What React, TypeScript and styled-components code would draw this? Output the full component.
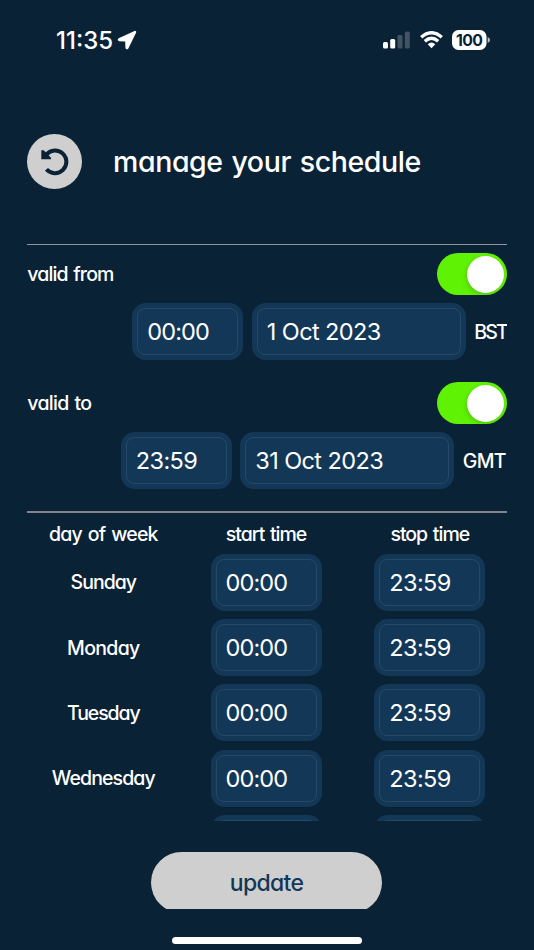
import React from "react";
import styled, { createGlobalStyle } from "styled-components";

const GlobalStyle = createGlobalStyle`
  * { box-sizing: border-box; }
  body { margin: 0; background: #0a2236; }
`;

const Screen = styled.div`
  width: 534px;
  height: 950px;
  overflow: hidden;
  display: flex;
  flex-direction: column;
  background: #0a2236;
  color: #fff;
  font-family: Inter, sans-serif;
`;

const Label = styled.span<{ $size?: number; $track?: number }>`
  font-family: Inter, sans-serif;
  font-weight: 500;
  font-feature-settings: "cv11";
  white-space: nowrap;
  line-height: 30px;
  font-size: ${(p) => p.$size ?? 19.5}px;
  letter-spacing: ${(p) => p.$track ?? 0}px;
  word-spacing: 1.5px;
`;

const StatusBar = styled.div`
  height: 80px;
  flex: none;
  padding: 0 44px 0 56px;
  display: flex;
  align-items: center;
  justify-content: space-between;
`;

const Clock = styled.div`
  display: flex;
  align-items: center;
  gap: 4px;
  font-size: 24px;
  font-weight: 500;
  letter-spacing: 0;
`;

const Indicators = styled.div`
  display: flex;
  align-items: center;
  gap: 9.5px;
`;

const Header = styled.header`
  height: 163.5px;
  flex: none;
  padding: 0 0 0 27px;
  display: flex;
  align-items: center;
  gap: 31px;
`;

const Title = styled(Label)`
  padding-top: 1px;
`;

const BackButton = styled.button`
  width: 55px;
  height: 55px;
  padding: 0;
  border: 0;
  border-radius: 50%;
  background: #cfcfcf;
`;

const Content = styled.main`
  width: 479.5px;
  margin-left: 27.3px;
  height: 577.5px;
  flex: none;
  overflow: hidden;
`;

const Rule = styled.hr`
  margin: 0;
  border: 0;
  height: 1.5px;
  background: #929396;
`;

const TableRule = styled(Rule)`
  height: 2px;
  margin-top: 8px;
  background: #85838a;
`;

const ToggleRow = styled.div`
  height: 42px;
  display: flex;
  align-items: center;
  justify-content: space-between;
`;

const Toggle = styled.div`
  width: 69.5px;
  height: 42px;
  padding: 2.5px 3px;
  display: flex;
  justify-content: flex-end;
  border-radius: 21px;
  background: #5ff205;
`;

const Knob = styled.div`
  width: 37px;
  height: 37px;
  border-radius: 50%;
  background: #fff;
  box-shadow: -1px 2px 5px rgba(0, 0, 0, 0.16);
`;

const Period = styled.section`
  padding-top: 8px;
  height: 129.2px;
`;

const FieldRow = styled.div`
  margin-top: 8px;
  display: flex;
  align-items: center;
  justify-content: flex-end;
  gap: 8.5px;
`;

const Zone = styled(Label)<{ $width: number }>`
  width: ${(p) => p.$width}px;
`;

const Field = styled.div<{ $wide?: boolean }>`
  width: ${(p) => (p.$wide ? 214 : 111)}px;
  height: 57px;
  flex: none;
  padding: 5px;
  border-radius: 14px;
  background: #133857;
`;

const FieldText = styled.div<{ $track: number }>`
  height: 47px;
  padding: 0 0 0 9px;
  display: flex;
  align-items: center;
  border: 1px solid #284863;
  border-radius: 8px;
  font-size: 23.5px;
  white-space: nowrap;
  letter-spacing: ${(p) => p.$track}px;
`;

const TableGrid = styled.div`
  display: grid;
  grid-template-columns: 152px 173.5px 154px;
  justify-items: center;
  align-items: center;
`;

const Heading = styled(TableGrid)`
  height: 40.6px;
`;

const DayRow = styled(TableGrid)`
  height: 57px;
  margin-bottom: 8.2px;
`;

const Footer = styled.footer`
  height: 87.5px;
  flex: none;
  padding-top: 31px;
  display: flex;
  justify-content: center;
  overflow: hidden;
`;

const UpdateButton = styled.button`
  width: 231px;
  height: 61px;
  flex: none;
  margin-right: 1px;
  border: 0;
  border-radius: 31px;
  background: #cfcfcf;
  color: #133857;
`;

const HomeIndicator = styled.div`
  width: 190px;
  height: 7px;
  flex: none;
  margin: 28.5px auto 0;
  border-radius: 4px;
  background: #fff;
`;

const TimeField = ({ value }: { value?: string }) => (
  <Field>
    <FieldText $track={value === "00:00" ? -0.9 : -0.6}>{value}</FieldText>
  </Field>
);

const periods = [
  { label: "valid from", track: -0.9, time: "00:00", date: "1 Oct 2023", dateTrack: -0.6, zone: "BST", zoneWidth: 32.5, zoneTrack: -1.8 },
  { label: "valid to", track: -0.7, time: "23:59", date: "31 Oct 2023", dateTrack: -0.6, zone: "GMT", zoneWidth: 44, zoneTrack: -0.7 },
];

const days = [
  { name: "Sunday", track: -1 },
  { name: "Monday", track: -0.7 },
  { name: "Tuesday", track: -1.1 },
  { name: "Wednesday", track: -0.9 },
];

export default function App() {
  return (
    <Screen>
      <GlobalStyle />
      <StatusBar>
        <Clock>
          11:35
          <svg width="20" height="20" viewBox="0 0 20 20">
            <path d="M17.9 1.7 L2 9 Q1.1 9.9 2.1 10.3 L9 10.6 L9.3 17.8 Q9.8 19 10.7 17.9 L18.3 2.3 Q18.5 1.6 17.9 1.7Z" fill="#fff" stroke="#fff" strokeWidth="1.7" strokeLinejoin="round" />
          </svg>
        </Clock>
        <Indicators>
          <svg width="27" height="18" viewBox="0 0 27 18">
            <rect x="0" y="11" width="5" height="6.5" rx="1.5" fill="#fff" />
            <rect x="7.2" y="8" width="5" height="9.5" rx="1.5" fill="#fff" />
            <rect x="14.5" y="4" width="5" height="13.5" rx="1.5" fill="#425363" />
            <rect x="21.8" y="0.5" width="5" height="17" rx="1.5" fill="#425363" />
          </svg>
          <svg width="23" height="18" viewBox="0 0 23 18">
            <g fill="none" stroke="#fff" strokeWidth="3.3">
              <path d="M1.2 6.2 Q11.5 -2.8 21.8 6.2" />
              <path d="M4.8 10.2 Q11.5 4.2 18.2 10.2" />
            </g>
            <path d="M7.7 13.2 Q11.5 10 15.3 13.2 L11.5 17.3Z" fill="#fff" />
          </svg>
          <svg width="38" height="20" viewBox="0 0 38 20">
            <rect width="34.5" height="20" rx="6.5" fill="#fff" />
            <path d="M35.7 7 Q38 8 38 10 Q38 12 35.7 13Z" fill="#b9bfc4" />
            <text x="17.1" y="15.7" textAnchor="middle" fontFamily="Inter, sans-serif" fontSize="15.8" fontWeight="700" letterSpacing="-.7" fill="#0a2236">100</text>
          </svg>
        </Indicators>
      </StatusBar>
      <Header>
        <BackButton aria-label="Back">
          <svg width="55" height="55" viewBox="0 0 55 55">
            <path d="M19.5 20.5 A11.3 11.3 0 1 1 19.5 35.2" fill="none" stroke="#0a2236" strokeWidth="4" />
            <path d="M14.3 16.2 H16.7 L24 23.8 V25.3 H14.3Z" fill="#0a2236" />
          </svg>
        </BackButton>
        <Title $size={28.5} $track={-0.4}>manage your schedule</Title>
      </Header>
      <Content>
        <Rule />
        {periods.map((p) => (
          <Period key={p.label}>
            <ToggleRow>
              <Label $track={p.track}>{p.label}</Label>
              <Toggle><Knob /></Toggle>
            </ToggleRow>
            <FieldRow>
              <TimeField value={p.time} />
              <Field $wide><FieldText $track={p.dateTrack}>{p.date}</FieldText></Field>
              <Zone $width={p.zoneWidth} $track={p.zoneTrack}>{p.zone}</Zone>
            </FieldRow>
          </Period>
        ))}
        <TableRule />
        <Heading>
          <Label $track={-0.8}>day of week</Label>
          <Label $track={-1}>start time</Label>
          <Label $track={-1}>stop time</Label>
        </Heading>
        {days.map((d) => (
          <DayRow key={d.name}>
            <Label $track={d.track}>{d.name}</Label>
            <TimeField value="00:00" />
            <TimeField value="23:59" />
          </DayRow>
        ))}
        <DayRow>
          <span />
          <TimeField />
          <TimeField />
        </DayRow>
      </Content>
      <Footer>
        <UpdateButton>
          <Label $size={23} $track={-0.7}>update</Label>
        </UpdateButton>
      </Footer>
      <HomeIndicator />
    </Screen>
  );
}
